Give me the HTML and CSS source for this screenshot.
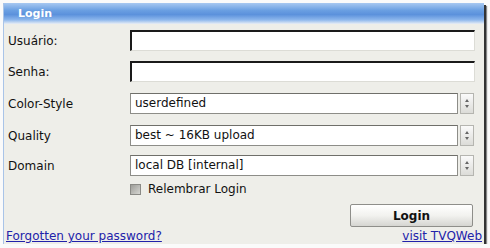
FILE: index.html
```html
<!DOCTYPE html>
<html lang="pt">
<head>
<meta charset="UTF-8" />
<title>Login</title>
<link rel="stylesheet" href="styles.css">
</head>
<body>

<div class="frame">
  <div class="header">Login</div>

  <div class="form">
    <div class="row">
      <label>Usuário:</label>
      <input class="text" type="text" />
    </div>
    <div class="row">
      <label>Senha:</label>
      <input class="text" type="password" />
    </div>
    <div class="row">
      <label>Color-Style</label>
      <div class="select">
        <span class="value">userdefined</span>
        <span class="spin"><i class="up"></i><i class="down"></i></span>
      </div>
    </div>
    <div class="row">
      <label>Quality</label>
      <div class="select">
        <span class="value">best ~ 16KB upload</span>
        <span class="spin"><i class="up"></i><i class="down"></i></span>
      </div>
    </div>
    <div class="row">
      <label>Domain</label>
      <div class="select">
        <span class="value">local DB [internal]</span>
        <span class="spin"><i class="up"></i><i class="down"></i></span>
      </div>
    </div>

    <div class="remember">
      <span class="check"></span>
      <span>Relembrar Login</span>
    </div>

    <div class="actions">
      <button class="btn">Login</button>
    </div>
  </div>

  <div class="links">
    <a href="#">Forgotten your password?</a>
    <a href="#">visit TVQWeb</a>
  </div>
</div>

</body>
</html>
```

FILE: styles.css
```css
body {
  margin: 0;
  background: #fafafa;
  font-family: "DejaVu Sans", Verdana, sans-serif;
  font-size: 12px;
  color: #111;
}
.frame {
  margin: 3px 0 0 3px;
  width: 480px;
  height: 241px;
  background: #eeeee9;
  border-left: 1px solid #a9c4e8;
  box-shadow: 2px 2px 0 #333, 3px 3px 1px #888;
  display: flex;
  flex-direction: column;
}
.header {
  height: 21px;
  line-height: 21px;
  padding-left: 14px;
  color: #fff;
  font-size: 11px;
  font-weight: bold;
  background: linear-gradient(#a7c8f1 0%, #6a9fe2 35%, #5b91dc 55%, #8cb6ec 80%, #e9eef5 100%);
}
.form {
  padding: 6px 9px 0 4px;
  display: flex;
  flex-direction: column;
  gap: 10px;
}
.row {
  display: flex;
  align-items: center;
  height: 21px;
}
.row:nth-child(3),
.row:nth-child(4) {
  margin-top: 1px;
}
.row:nth-child(5) {
  margin-top: -1px;
}
.row label {
  width: 122px;
  flex: none;
}
.text {
  box-sizing: border-box;
  width: 346px;
  height: 21px;
  margin: 0;
  padding: 0 4px;
  background: #fff;
  border-top: 2px solid #1a1a1a;
  border-left: 2px solid #1a1a1a;
  border-right: 1px solid #dcdcd6;
  border-bottom: 1px solid #dcdcd6;
  font: inherit;
}
.select {
  width: 344px;
  height: 21px;
  display: flex;
  gap: 2px;
}
.value {
  flex: 1;
  box-sizing: border-box;
  height: 21px;
  line-height: 19px;
  padding-left: 4px;
  background: #fff;
  border: 1px solid #8d8d88;
  border-top-color: #6f6f6a;
}
.spin {
  width: 14px;
  box-sizing: border-box;
  border: 1px solid #b5b5b0;
  background: linear-gradient(#fafafa, #dcdcd8);
  display: flex;
  flex-direction: column;
  align-items: center;
  justify-content: center;
  gap: 3px;
}
.spin i {
  width: 0;
  height: 0;
  border-left: 2px solid transparent;
  border-right: 2px solid transparent;
}
.spin .up {
  border-bottom: 3px solid #666;
}
.spin .down {
  border-top: 3px solid #666;
}
.remember {
  display: flex;
  align-items: center;
  gap: 7px;
  margin: -4px 0 0 122px;
}
.check {
  width: 9px;
  height: 9px;
  border: 1px solid #8a8a86;
  background: linear-gradient(135deg, #9d9d99, #d6d6d2);
}
.actions {
  display: flex;
  justify-content: flex-end;
  margin-top: -2px;
}
.btn {
  width: 123px;
  height: 23px;
  margin-right: 2px;
  font: inherit;
  font-weight: bold;
  color: #111;
  border: 1px solid #8e8e8a;
  border-radius: 2px;
  background: linear-gradient(#ffffff, #f2f2ef 50%, #d5d5d1);
}
.links {
  margin-top: auto;
  padding: 0 2px 1px 2px;
  display: flex;
  justify-content: space-between;
}
.links a {
  color: #2222aa;
}
```
